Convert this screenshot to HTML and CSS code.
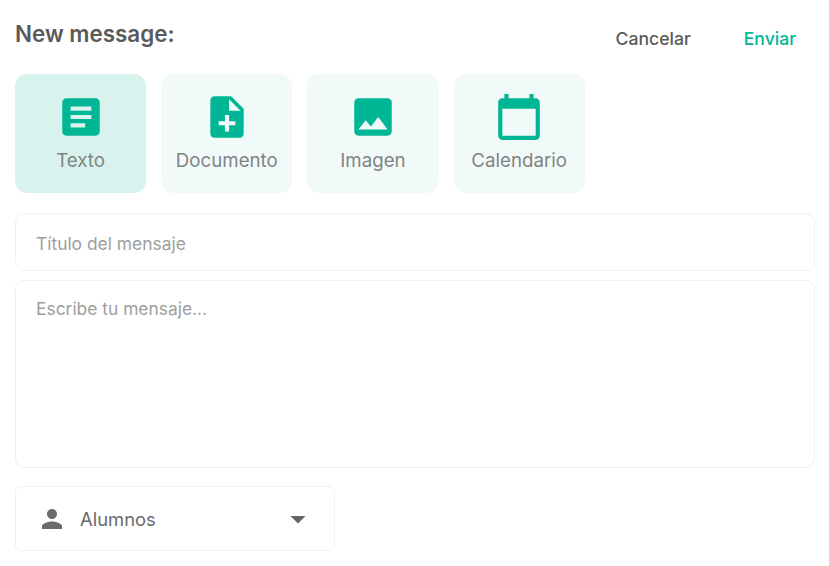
FILE: index.html
```html
<!DOCTYPE html>
<html lang="es">
<head>
  <meta charset="UTF-8">
  <title>New message</title>
  <link rel="stylesheet" href="styles.css">
</head>
<body>
  <div class="header">
    <h2>New message:</h2>
    <div class="actions">
      <button type="button" class="action cancel">Cancelar</button>
      <button type="button" class="action send">Enviar</button>
    </div>
  </div>

  <div class="types">
    <button type="button" class="type active">
      <svg viewBox="0 0 24 24"><path fill-rule="evenodd" d="M19 3H5c-1.1 0-2 .9-2 2v14c0 1.1.9 2 2 2h14c1.1 0 2-.9 2-2V5c0-1.1-.9-2-2-2zm-5 14H7v-2h7v2zm3-4H7v-2h10v2zm0-4H7V7h10v2z"/></svg>
      <span>Texto</span>
    </button>
    <button type="button" class="type">
      <svg viewBox="0 0 24 24"><path fill-rule="evenodd" d="M14 2H6c-1.1 0-1.99.9-1.99 2L4 20c0 1.1.89 2 1.99 2H18c1.1 0 2-.9 2-2V8l-6-6zm2 14h-3v3h-2v-3H8v-2h3v-3h2v3h3v2zm-3-7V3.5L18.5 9H13z"/></svg>
      <span>Documento</span>
    </button>
    <button type="button" class="type">
      <svg viewBox="0 0 24 24"><path fill-rule="evenodd" d="M21 19V5c0-1.1-.9-2-2-2H5c-1.1 0-2 .9-2 2v14c0 1.1.9 2 2 2h14c1.1 0 2-.9 2-2zM8.5 13.5l2.5 3.01L14.5 12l4.5 6H5l3.5-4.5z"/></svg>
      <span>Imagen</span>
    </button>
    <button type="button" class="type">
      <svg viewBox="0 0 24 24"><path fill-rule="evenodd" d="M20 3h-1V1h-2v2H7V1H5v2H4c-1.1 0-2 .9-2 2v16c0 1.1.9 2 2 2h16c1.1 0 2-.9 2-2V5c0-1.1-.9-2-2-2zm0 18H4V8h16v13z"/></svg>
      <span>Calendario</span>
    </button>
  </div>

  <input type="text" class="field title-field" placeholder="Título del mensaje">
  <textarea class="field body-field" placeholder="Escribe tu mensaje..."></textarea>

  <div class="select">
    <svg class="person" viewBox="0 0 24 24"><path d="M12 12c2.21 0 4-1.79 4-4s-1.79-4-4-4-4 1.79-4 4 1.79 4 4 4zm0 2c-2.67 0-8 1.34-8 4v2h16v-2c0-2.66-5.33-4-8-4z"/></svg>
    <span class="select-label">Alumnos</span>
    <svg class="caret" viewBox="0 0 24 24"><path d="M7 10l5 5 5-5z"/></svg>
  </div>
</body>
</html>
```

FILE: styles.css
```css
body {
  font-family: Inter, "Liberation Sans", sans-serif;
  margin: 0;
  padding: 0 14px 0 15px;
  background: #fff;
  color: #555;
}
.header {
  display: flex;
  justify-content: space-between;
  align-items: flex-start;
  height: 74px;
}
h2 {
  margin: 20px 0 0;
  font-size: 22.4px;
  line-height: 28px;
  font-weight: 600;
  color: #5a5a5a;
}
.actions {
  display: flex;
  margin-top: 25px;
  padding-right: 19px;
  gap: 53px;
}
.action {
  padding: 0;
  border: none;
  background: none;
  font-family: inherit;
  font-size: 17.6px;
  font-weight: 500;
  line-height: 28px;
  cursor: pointer;
}
.cancel {
  color: #5a5a5a;
}
.send {
  color: #00b695;
}
.types {
  display: flex;
  gap: 15px;
  margin-bottom: 20px;
}
.type {
  display: flex;
  flex-direction: column;
  align-items: center;
  flex: 0 0 131.2px;
  height: 119px;
  padding: 18px 0 0;
  border: none;
  border-radius: 12px;
  background: #f2faf9;
  font-family: inherit;
  cursor: pointer;
}
.type.active {
  background: #d8f3ee;
}
.type svg {
  width: 50px;
  height: 50px;
  fill: #00b695;
}
.type span {
  margin-top: 7px;
  font-size: 18.7px;
  line-height: 24px;
  white-space: nowrap;
  color: #808384;
}
.field {
  display: block;
  box-sizing: border-box;
  width: 100%;
  padding: 0 20px;
  border: 1px solid #ebf0fa;
  border-radius: 10px;
  background: #fff;
  font-family: inherit;
  font-size: 17.4px;
  color: #555;
  outline: none;
}
.field::placeholder {
  color: #9e9e9e;
  opacity: 1;
}
.title-field {
  height: 58px;
  margin-bottom: 9px;
  padding-top: 2px;
}
.body-field {
  height: 188px;
  padding-top: 17px;
  line-height: 22px;
  resize: none;
  margin-bottom: 18px;
}
.select {
  display: flex;
  align-items: center;
  box-sizing: border-box;
  width: 320px;
  height: 65px;
  padding: 0 18px 0 21px;
  border: 1px solid #ebf0fa;
  border-radius: 6px;
}
.person {
  width: 30px;
  height: 30px;
  fill: #6b6b6b;
}
.select-label {
  flex: 1;
  margin-left: 13px;
  font-size: 18.4px;
  color: #6a6a6a;
}
.caret {
  width: 36px;
  height: 36px;
  fill: #666;
}
```
